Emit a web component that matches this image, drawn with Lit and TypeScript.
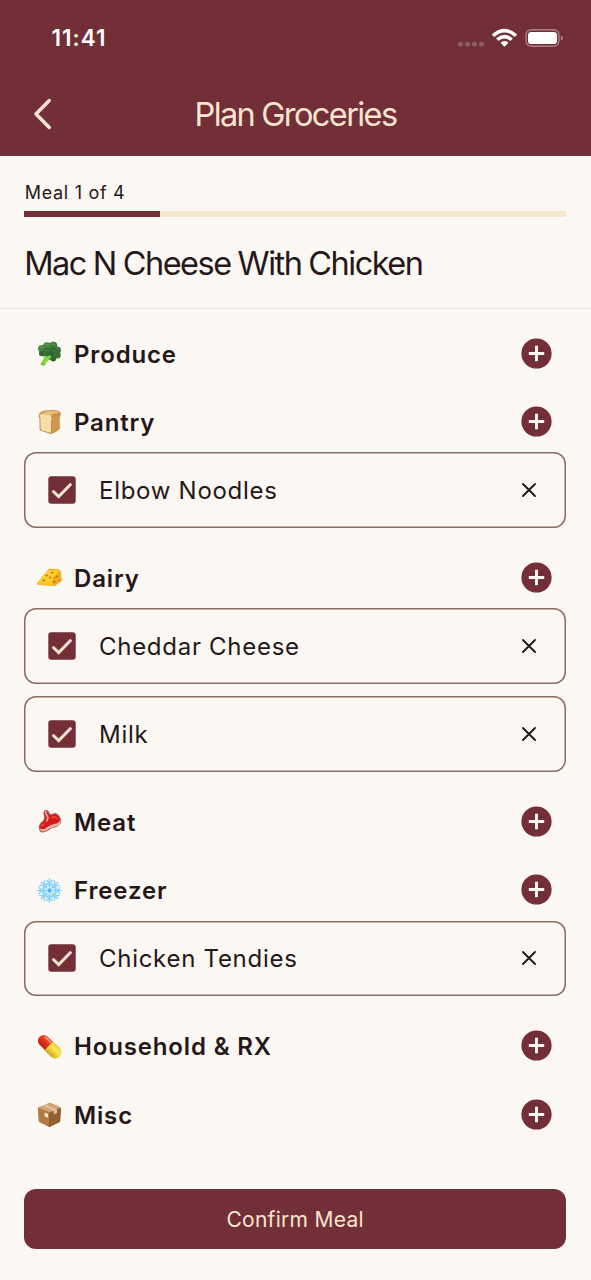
import { LitElement, html, css, svg, nothing } from "lit";
import { customElement, property } from "lit/decorators.js";

const emoji: Record<string, unknown> = {
  produce: svg`
    <path d="M10 13 L15.5 18 Q10.500 20 8 25.500 Q5.500 26.500 3.500 24 Q7.500 19.500 8 14Z" fill="#6fc52f"/>
    <path d="M9.500 15 L7.500 23.500 M12.500 17 L6 25" stroke="#a1df4e" stroke-width="1.100" fill="none"/>
    <path d="M8 15.500 L5.500 13.500 M13 18 L17 20" stroke="#4c9a29" stroke-width="2.400"/>
    <circle cx="5" cy="8" r="3.900" fill="#4b8742"/><circle cx="5" cy="13" r="2.900" fill="#2d6531"/>
    <circle cx="10.500" cy="5.500" r="4.200" fill="#4a8543"/><circle cx="17" cy="5" r="4.100" fill="#3e7a39"/>
    <circle cx="10.500" cy="11.500" r="4.400" fill="#356f35"/><circle cx="16.500" cy="12" r="4.600" fill="#2c632f"/>
    <circle cx="21.300" cy="9.500" r="3.600" fill="#366e34"/><circle cx="21" cy="14.500" r="3.700" fill="#37722f"/>
    <circle cx="17" cy="18.500" r="2.900" fill="#2e6a2c"/>
    <path d="M3 6.500Q5 4.500 7 7M8.500 4Q11 2.500 13 5M15 3.500Q18 2 19.500 5M8.500 10Q11 8.500 13 11M14.500 10Q17 8.500 19 11M20 8Q22 7.500 23 9" stroke="#72a45f" stroke-width="1" fill="none" opacity=".6"/>`,
  pantry: svg`
    <path d="M2 6Q3 2.500 8 1.500L18 1Q25 1.500 24.700 5.500L23.500 10L23.700 20.500Q20 24.500 14.500 26L4.500 23Q2.500 22.500 2.700 20.500L2.600 10Q1.200 8 2 6Z" fill="#c68a43"/>
    <path d="M4 4.500Q7 2.300 17.500 1.800Q22 1.800 23.800 4.300Q18 4 14.500 7Z" fill="#e4bd7b"/>
    <path d="M2.600 6.500Q4.500 4.200 9 5.700Q15.300 5.500 15.300 9.500L14.500 13.500L14.500 24.800L5 22.300Q3.600 21.700 3.700 20L3.500 10Z" fill="#f5dfab"/>
    <path d="M16 8Q20 4.500 23.800 6.300L22.600 10V20Q19.500 23 15.600 24.400V13Z" fill="#cf974f"/>
    <path d="M6 9h1m3 2h1m-4 4h1m3 3h1m-5 1h1" stroke="#e3c88d" stroke-width="1"/>`,
  dairy: svg`
    <path d="M0 19L11 5.500Q11.700 4 14 4L22 4.500Q24.300 5 24.800 7L25.800 16L19 21.500Q18 22.300 16 21.700L2 20.800Q0 20.300 0 19Z" fill="#f3a91b"/>
    <path d="M.5 18.500L11.600 5.300L23.800 5.700L15.800 14.500L15.200 18.800Z" fill="#ffcf32"/>
    <path d="M16 14.500L24.300 7L25.400 16L16 21.600Z" fill="#f3b024"/>
    <path d="M.4 18.900L15.500 17.800L16 21.600L2 20.600Z" fill="#ffc323"/>
    <g fill="#c8790e"><ellipse cx="10" cy="11" rx="1.500" ry="1"/><ellipse cx="16" cy="8" rx="1.500" ry="1"/><ellipse cx="7" cy="16" rx="1.700" ry=".9"/><ellipse cx="13.500" cy="13" rx="1.300" ry="1"/><circle cx="18" cy="17.500" r="1.300"/><circle cx="21" cy="12" r="1.200"/><circle cx="23" cy="16" r=".9"/><circle cx="19" cy="13" r=".7"/></g>`,
  meat: svg`
    <path d="M2 20Q1.500 16 5 13.500Q8.500 10.500 7 6Q6 2 8.800 1Q12 .5 13.200 5Q15 6 17 4.800Q20 3 23 7Q26 11 24.500 15Q22 18.500 15 20Q10 24 6 24.500Q2.500 24.500 2 20Z" fill="#b64642"/>
    <path d="M3 18.500Q4 15 7 13Q10.500 10 8.500 6Q7.500 2.800 9.300 2Q11.500 2.500 12 6.500Q15 8 17.500 6Q20 5 22.500 8.500Q24.500 12 21 14.500Q14 15.500 8 21Q4 21.500 3 18.500Z" fill="#d7191d"/>
    <path d="M2.200 19.500Q4 22 8 20.800Q14 16 20.500 15.200Q23.500 14 24.500 11.500Q25 15.500 21 17.500Q14 19.500 7.500 23.500Q3 23.500 2.200 19.500Z" fill="#e3b7a9"/>
    <path d="M8.700 2Q9.500 6 11.500 9L10 13" stroke="#f3b9b0" stroke-width="1.600" fill="none"/>
    <path d="M4.500 18Q6 15 8.500 15.500M15 9Q19 7 21 10" stroke="#ef514a" stroke-width="1.200" fill="none"/>`,
  freezer: svg`
    <circle cx="13" cy="13" r="8.500" fill="#c4eafc"/>
    ${[0, 45, 90, 135, 180, 225, 270, 315].map(
      (a) => svg`<g transform="rotate(${a} 13 13)" fill="none" stroke-linecap="round">
        <path d="M13 12V.8M9.700 2.300L13 5L16.300 2.300M10.800 6L13 8L15.200 6" stroke="#86d1f5" stroke-width="1.400"/></g>`
    )}
    <circle cx="13" cy="13" r="3.400" fill="none" stroke="#e4f8ff" stroke-width=".8"/>
    <circle cx="13" cy="13" r="1.700" fill="#4eafe2"/>`,
  household: svg`
    <defs><linearGradient id="red" x1="0" y1="0" x2="0" y2="1"><stop offset="0" stop-color="#f35a3c"/><stop offset=".45" stop-color="#e8351f"/><stop offset="1" stop-color="#b91c16"/></linearGradient>
    <linearGradient id="yel" x1="0" y1="0" x2="0" y2="1"><stop offset="0" stop-color="#f3ca22"/><stop offset=".35" stop-color="#fbe85a"/><stop offset="1" stop-color="#cfa815"/></linearGradient></defs>
    <g transform="rotate(45 13 13)"><path d="M12.500 7H4.500A6 6 0 0 0 4.500 19H12.500Z" fill="url(#red)"/>
    <path d="M12 6.500H21.300A6.500 6.500 0 0 1 21.300 19.500H12Z" fill="url(#yel)"/>
    <path d="M3 9.500Q7 8.500 11 9.200" stroke="#ff9d7c" stroke-width="1.400" fill="none" stroke-linecap="round"/></g>`,
  misc: svg`
    <path d="M1 6L13.500 .8L25 6L24 20.500L13 26L2 20.500Z" fill="#a8733d"/>
    <path d="M1 6L13.500 .8L25 6L13.300 11Z" fill="#cfa475"/>
    <path d="M1 6L13.300 11L13 26L2 20.500Z" fill="#b27b46"/>
    <path d="M25 6L13.300 11L13 26L24 20.500Z" fill="#936030"/>
    <path d="M6 4L17.500 9.200V13L20.800 11.500V7.700L9.500 2.500Z" fill="#dfc299"/>
    <path d="M8 10.800L11.500 12.400V16.500L8 15Z" fill="#eee5d8"/>
    <path d="M13.300 11L13 26" stroke="#7c4e27" stroke-width=".5"/>`,
};

interface Section {
  key: string;
  name: string;
  items: string[];
}

const sections: Section[] = [
  { key: "produce", name: "Produce", items: [] },
  { key: "pantry", name: "Pantry", items: ["Elbow Noodles"] },
  { key: "dairy", name: "Dairy", items: ["Cheddar Cheese", "Milk"] },
  { key: "meat", name: "Meat", items: [] },
  { key: "freezer", name: "Freezer", items: ["Chicken Tendies"] },
  { key: "household", name: "Household & RX", items: [] },
  { key: "misc", name: "Misc", items: [] },
];

@customElement("status-bar")
class StatusBar extends LitElement {
  static styles = css`
    :host { display: flex; align-items: center; justify-content: space-between; height: 75px; padding: 0 27px 0 51.500px; color: #fff; }
    .time { font-size: 22.500px; font-weight: 600; letter-spacing: 1px; line-height: 28px; }
    svg { display: block; }
  `;
  render() {
    return html`<span class="time">11:41</span>
      <svg width="108" height="24" viewBox="0 0 108 24" fill="#fff">
        <g fill="#8e5a63"><rect x="2" y="16" width="5" height="4.500" rx="1.600"/><rect x="9" y="16" width="5" height="4.500" rx="1.600"/><rect x="16" y="16" width="5" height="4.500" rx="1.600"/><rect x="23" y="16" width="5" height="4.500" rx="1.600"/></g>
        <path d="M36.300 7.900Q48.500-2.500 60.700 7.900Q61.300 8.500 60.700 9.100L59.300 10.500Q58.700 11 58.100 10.500Q48.500 2.600 38.900 10.500Q38.300 11 37.700 10.500L36.300 9.100Q35.700 8.500 36.300 7.900Z"/>
        <path d="M40.600 12Q48.500 5.600 56.400 12Q57 12.500 56.400 13.100L54.900 14.600Q54.300 15 53.800 14.600Q48.500 10.500 43.200 14.600Q42.700 15 42.100 14.600L40.600 13.100Q40 12.500 40.600 12Z"/>
        <path d="M45 16.300Q48.500 13.600 52 16.300Q52.500 16.800 52 17.300L49 20.200Q48.500 20.700 48 20.200L45 17.300Q44.500 16.800 45 16.300Z"/>
        <rect x="70" y="3.700" width="33" height="16.600" rx="5.300" fill="none" stroke="#ab8185" stroke-width="1.400"/>
        <rect x="72" y="5.900" width="29" height="12.200" rx="3.400"/>
        <path d="M104.800 9.500Q107 10.200 107 12Q107 13.800 104.800 14.500Z" fill="#ab8185"/>
      </svg>`;
  }
}

@customElement("grocery-item")
class GroceryItem extends LitElement {
  @property() name = "";
  static styles = css`
    :host { display: flex; align-items: center; box-sizing: border-box; height: 75.650px; margin-bottom: 12.100px; padding: 0 29.500px 0 24px; box-shadow: inset 0 0 0 1.500px #8b6a61; border-radius: 12px; }
    .box { flex: none; width: 28px; height: 28px; }
    .name { flex: 1; padding: 1.500px 0 0 22.800px; font-size: 24px; font-weight: 400; letter-spacing: 0.72px; line-height: 32px; }
    .remove { flex: none; width: 16px; height: 16px; }
  `;
  render() {
    return html`
      <svg class="box" viewBox="0 0 28 28"><rect x=".3" y=".3" width="27.400" height="27.400" rx="3" fill="#722f37"/><path d="M4.600 14.700L10.700 20.600L23.200 7.800" fill="none" stroke="#fbe5d0" stroke-width="2.900"/></svg>
      <span class="name">${this.name}</span>
      <svg class="remove" viewBox="0 0 16 16"><path d="M2 2L14 14M14 2L2 14" fill="none" stroke="#231719" stroke-width="1.900" stroke-linecap="round"/></svg>`;
  }
}

@customElement("grocery-section")
class GrocerySection extends LitElement {
  @property({ attribute: false }) section!: Section;
  static styles = css`
    :host { display: flow-root; margin-bottom: 6.350px; }
    .head { display: flex; align-items: center; height: 62px; padding: 0 14.500px 0 12.500px; }
    .emoji { flex: none; width: 25px; height: 25px; margin-top: 1px; }
    .title { flex: 1; padding: 3px 0 0 12.300px; font-size: 24px; font-weight: 600; letter-spacing: 0.85px; line-height: 32px; }
    .add { flex: none; width: 31px; height: 31px; }
  `;
  render() {
    const s = this.section;
    return html`
      <div class="head">
        <svg class="emoji" viewBox="0 0 26 26">${emoji[s.key]}</svg>
        <span class="title">${s.name}</span>
        <svg class="add" viewBox="0 0 31 31"><circle cx="15.500" cy="15.500" r="15.100" fill="#722f37"/><path d="M15.500 7.800V23.200M7.800 15.500H23.200" stroke="#fffaf4" stroke-width="2.900"/></svg>
      </div>
      ${s.items.length ? s.items.map((i) => html`<grocery-item .name=${i}></grocery-item>`) : nothing}`;
  }
}

@customElement("app-root")
class AppRoot extends LitElement {
  static styles = css`
    :host { display: flex; flex-direction: column; box-sizing: border-box; height: 1280px; overflow: hidden; background: #fbf7f2; color: #261719; font-family: Inter, "Liberation Sans", sans-serif; }
    .header { flex: none; height: 156px; background: #722f37; }
    .nav { display: grid; grid-template-columns: 40px 1fr 40px; align-items: center; height: 78px; padding: 0 24px; color: #fbe5d0; }
    .back { display: block; width: 36px; height: 36px; }
    .heading { margin: 0; padding-top: 2px; text-align: center; font-size: 32.500px; font-weight: 400; letter-spacing: -1.600px; word-spacing: -0.5px; line-height: 40px; }
    .meal { flex: none; box-sizing: border-box; height: 153px; padding: 25px 24.800px 0 24.200px; border-bottom: 1.500px solid #e9e4e1; }
    .step { padding-left: 0.5px; font-size: 18px; font-weight: 400; letter-spacing: 0.7px; line-height: 24px; }
    .track { height: 6px; margin-top: 6px; background: #f5e6cc; }
    .fill { height: 100%; background: #722f37; }
    .dish { margin: 27px 0 0; font-size: 32.500px; font-weight: 400; letter-spacing: -1.480px; word-spacing: -0.8px; line-height: 40px; }
    .list { flex: 1; padding: 13px 24.800px 0 24.200px; }
    .footer { flex: none; padding: 0 24.800px 31px 24.200px; }
    .confirm { display: block; width: 100%; height: 60px; padding: 2px 0 0; border: 0; border-radius: 12px; background: #722f37; color: #fbe5d0; font: 400 21px/28px Inter, "Liberation Sans", sans-serif; letter-spacing: 0.3px; }
  `;
  render() {
    return html`
      <header class="header">
        <status-bar></status-bar>
        <div class="nav">
          <svg class="back" viewBox="0 0 36 36"><path d="M25.300 4.500L12 18L25.300 31.500" fill="none" stroke="#fbe5d0" stroke-width="3.500" stroke-linecap="round" stroke-linejoin="round"/></svg>
          <h1 class="heading">Plan Groceries</h1>
        </div>
      </header>
      <section class="meal">
        <div class="step">Meal 1 of 4</div>
        <div class="track"><div class="fill" style="width:${(1 / 4) * 100}%"></div></div>
        <h2 class="dish">Mac N Cheese With Chicken</h2>
      </section>
      <main class="list">${sections.map((s) => html`<grocery-section .section=${s}></grocery-section>`)}</main>
      <footer class="footer"><button class="confirm">Confirm Meal</button></footer>`;
  }
}
